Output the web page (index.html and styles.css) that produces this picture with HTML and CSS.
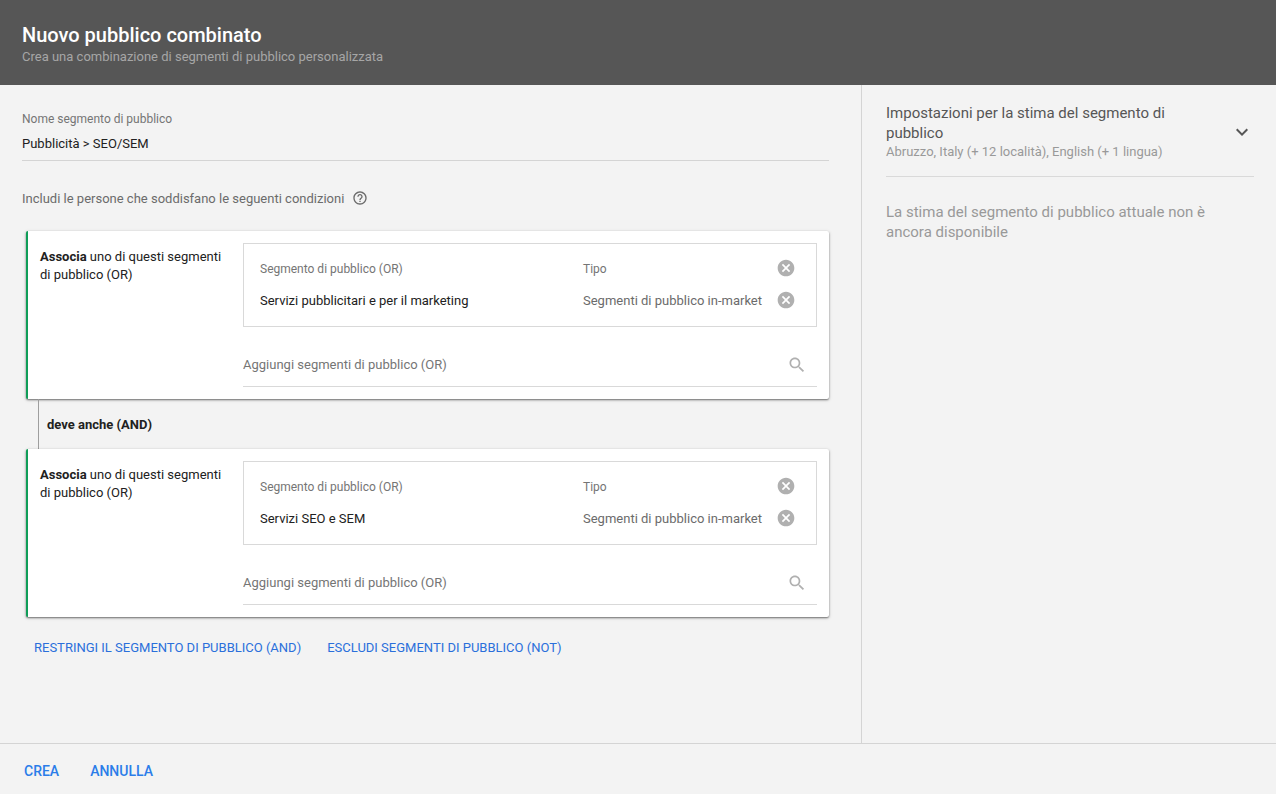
FILE: index.html
```html
<!DOCTYPE html>
<html lang="it">
<head>
<meta charset="utf-8">
<meta name="viewport" content="width=device-width, initial-scale=1">
<title>Nuovo pubblico combinato</title>
<link rel="stylesheet" href="styles.css">
</head>
<body>
<svg class="symbols" aria-hidden="true">
  <symbol id="cancel" viewBox="0 0 24 24"><path d="M12 2C6.47 2 2 6.47 2 12s4.47 10 10 10 10-4.47 10-10S17.53 2 12 2zm5 13.59L15.59 17 12 13.41 8.41 17 7 15.59 10.59 12 7 8.41 8.41 7 12 10.59 15.59 7 17 8.41 13.41 12 17 15.59z"/></symbol>
  <symbol id="search" viewBox="0 0 24 24"><path d="M15.5 14h-.79l-.28-.27C15.41 12.59 16 11.11 16 9.5 16 5.91 13.09 3 9.5 3S3 5.91 3 9.5 5.91 16 9.5 16c1.61 0 3.09-.59 4.23-1.57l.27.28v.79l5 4.99L20.49 19l-4.99-5zm-6 0C7.01 14 5 11.99 5 9.5S7.01 5 9.5 5 14 7.01 14 9.5 11.99 14 9.5 14z"/></symbol>
  <symbol id="help" viewBox="0 0 24 24"><path d="M11 18h2v-2h-2v2zm1-16C6.48 2 2 6.48 2 12s4.48 10 10 10 10-4.48 10-10S17.52 2 12 2zm0 18c-4.41 0-8-3.59-8-8s3.59-8 8-8 8 3.59 8 8-3.59 8-8 8zm0-14c-2.21 0-4 1.79-4 4h2c0-1.1.9-2 2-2s2 .9 2 2c0 2-3 1.75-3 5h2c0-2.25 3-2.5 3-5 0-2.21-1.79-4-4-4z"/></symbol>
  <symbol id="expand" viewBox="0 0 24 24"><path d="M16.59 8.59L12 13.17 7.41 8.59 6 10l6 6 6-6z"/></symbol>
</svg>
<div class="dialog">
  <header class="header">
    <h1 class="title">Nuovo pubblico combinato</h1>
    <p class="subtitle">Crea una combinazione di segmenti di pubblico personalizzata</p>
  </header>
  <div class="body">
    <main class="main">
      <div class="name-field">
        <label class="name-label" for="segment-name">Nome segmento di pubblico</label>
        <input class="name-input" id="segment-name" type="text" value="Pubblicità &gt; SEO/SEM">
      </div>
      <div class="intro">
        <span>Includi le persone che soddisfano le seguenti condizioni</span>
        <button class="icon-button" type="button" aria-label="Guida"><svg class="help-icon"><use href="#help"/></svg></button>
      </div>
      <section class="card">
        <p class="card-label"><b>Associa</b> uno di questi segmenti di pubblico (OR)</p>
        <div class="card-content">
          <div class="table-box">
            <table class="segments">
              <thead>
                <tr><th class="col-name" scope="col">Segmento di pubblico (OR)</th><th class="col-type" scope="col">Tipo</th><td class="col-action"><button class="icon-button" type="button" aria-label="Rimuovi tutto"><svg class="cancel-icon"><use href="#cancel"/></svg></button></td></tr>
              </thead>
              <tbody>
                <tr><td class="segment-name">Servizi pubblicitari e per il marketing</td><td>Segmenti di pubblico in-market</td><td class="col-action"><button class="icon-button" type="button" aria-label="Rimuovi"><svg class="cancel-icon"><use href="#cancel"/></svg></button></td></tr>
              </tbody>
            </table>
          </div>
          <div class="search-field">
            <input class="search-input" type="text" aria-label="Aggiungi segmenti di pubblico" placeholder="Aggiungi segmenti di pubblico (OR)">
            <svg class="search-icon" aria-hidden="true"><use href="#search"/></svg>
          </div>
        </div>
      </section>
      <p class="connector">deve anche (AND)</p>
      <section class="card">
        <p class="card-label"><b>Associa</b> uno di questi segmenti di pubblico (OR)</p>
        <div class="card-content">
          <div class="table-box">
            <table class="segments">
              <thead>
                <tr><th class="col-name" scope="col">Segmento di pubblico (OR)</th><th class="col-type" scope="col">Tipo</th><td class="col-action"><button class="icon-button" type="button" aria-label="Rimuovi tutto"><svg class="cancel-icon"><use href="#cancel"/></svg></button></td></tr>
              </thead>
              <tbody>
                <tr><td class="segment-name">Servizi SEO e SEM</td><td>Segmenti di pubblico in-market</td><td class="col-action"><button class="icon-button" type="button" aria-label="Rimuovi"><svg class="cancel-icon"><use href="#cancel"/></svg></button></td></tr>
              </tbody>
            </table>
          </div>
          <div class="search-field">
            <input class="search-input" type="text" aria-label="Aggiungi segmenti di pubblico" placeholder="Aggiungi segmenti di pubblico (OR)">
            <svg class="search-icon" aria-hidden="true"><use href="#search"/></svg>
          </div>
        </div>
      </section>
      <div class="actions">
        <button class="text-button" type="button">RESTRINGI IL SEGMENTO DI PUBBLICO (AND)</button>
        <button class="text-button" type="button">ESCLUDI SEGMENTI DI PUBBLICO (NOT)</button>
      </div>
    </main>
    <aside class="side">
      <button class="settings" type="button" aria-expanded="false">
        <span class="settings-text">
          <span class="settings-title">Impostazioni per la stima del segmento di pubblico</span>
          <span class="settings-summary">Abruzzo, Italy (+ 12 località), English (+ 1 lingua)</span>
        </span>
        <svg class="expand-icon" aria-hidden="true"><use href="#expand"/></svg>
      </button>
      <p class="estimate">La stima del segmento di pubblico attuale non è ancora disponibile</p>
    </aside>
  </div>
  <footer class="footer">
    <button class="footer-button" type="button">CREA</button>
    <button class="footer-button" type="button">ANNULLA</button>
  </footer>
</div>
</body>
</html>
```
FILE: styles.css
```css
* {
  box-sizing: border-box;
}

body {
  margin: 0;
  background: #f3f3f3;
  color: #212121;
  font: 13px/18px Roboto, sans-serif;
}

h1,
p {
  margin: 0;
}

button,
input {
  padding: 0;
  border: 0;
  background: none;
  color: inherit;
  font: inherit;
}

button {
  cursor: pointer;
}

input {
  outline: 0;
}

.symbols {
  display: none;
}

.dialog {
  display: flex;
  flex-direction: column;
  min-height: 100vh;
}

.header {
  padding: 23px 22px 19px;
  background: #565656;
}

.title {
  padding-bottom: 1px;
  color: #fff;
  font-size: 20px;
  font-weight: 500;
  line-height: 24px;
}

.subtitle {
  color: #a6a6a6;
}

.body {
  display: flex;
  flex: 1;
}

.main {
  flex: 1;
  padding: 25px 32px 24px 22px;
  border-right: 1px solid #d4d4d4;
}

.name-field {
  display: flex;
  flex-direction: column;
  border-bottom: 1px solid #d4d4d4;
}

.name-label {
  color: #757575;
  font-size: 12px;
}

.name-input {
  height: 32px;
  padding-bottom: 2px;
}

.intro {
  display: flex;
  align-items: flex-start;
  gap: 8px;
  margin: 29px 0 23px;
  color: #6b6b6b;
}

.icon-button {
  display: inline-flex;
}

.help-icon {
  width: 16px;
  height: 16px;
  fill: #6b6b6b;
}

.card {
  display: flex;
  margin-left: 4px;
  padding: 12px;
  border-left: 2px solid #0f9d58;
  border-radius: 2px;
  background: #fff;
  box-shadow: 0 1px 2px rgba(0, 0, 0, 0.5), 0 1px 4px rgba(0, 0, 0, 0.12);
}

.card-label {
  flex: 0 0 203px;
  padding: 5px 16px 0 0;
}

.card-content {
  flex: 1;
}

.table-box {
  padding: 8px 15px 10px 16px;
  border: 1px solid #d9d9d9;
}

.segments {
  width: 100%;
  border-collapse: collapse;
  table-layout: fixed;
}

.segments th,
.segments td {
  height: 32px;
  padding: 2px 0 0;
  color: #6b6b6b;
  text-align: left;
}

.segments th {
  color: #757575;
  font-size: 12px;
  font-weight: 400;
}

.segments .segment-name {
  color: #212121;
}

.segments .col-type {
  width: 193px;
}

.segments .col-action {
  width: 25px;
  padding: 0;
  line-height: 0;
}

.cancel-icon {
  width: 20px;
  height: 20px;
  fill: #b0b0b0;
}

.search-field {
  display: flex;
  align-items: center;
  height: 44px;
  margin-top: 16px;
  padding-right: 10px;
  border-bottom: 1px solid #d9d9d9;
}

.search-input {
  flex: 1;
}

.search-input::placeholder {
  color: #757575;
}

.search-icon {
  width: 20px;
  height: 20px;
  fill: #b0b0b0;
}

.connector {
  margin-left: 16px;
  padding: 17px 8px 15px;
  border-left: 1px solid #9e9e9e;
  font-weight: 700;
}

.actions {
  display: flex;
  gap: 26px;
  padding: 22px 12px 0;
}

.text-button {
  color: #2a6fdb;
}

.side {
  flex: 0 0 414px;
  padding: 18px 22px 24px 24px;
}

.settings {
  display: flex;
  align-items: center;
  width: 100%;
  padding-bottom: 15px;
  border-bottom: 1px solid #d9d9d9;
  text-align: left;
}

.settings-text {
  display: flex;
  flex: 1;
  flex-direction: column;
  padding-right: 40px;
}

.settings-title {
  color: #565656;
  font-size: 15px;
  line-height: 20px;
}

.settings-summary {
  color: #999;
}

.expand-icon {
  width: 24px;
  height: 24px;
  fill: #565656;
}

.estimate {
  padding-top: 25px;
  color: #999;
  font-size: 15px;
  line-height: 20px;
}

.footer {
  display: flex;
  gap: 31px;
  padding: 18px 24px 14px;
  border-top: 1px solid #d4d4d4;
}

.footer-button {
  color: #2b7de9;
  font-size: 14px;
  font-weight: 500;
}
```
